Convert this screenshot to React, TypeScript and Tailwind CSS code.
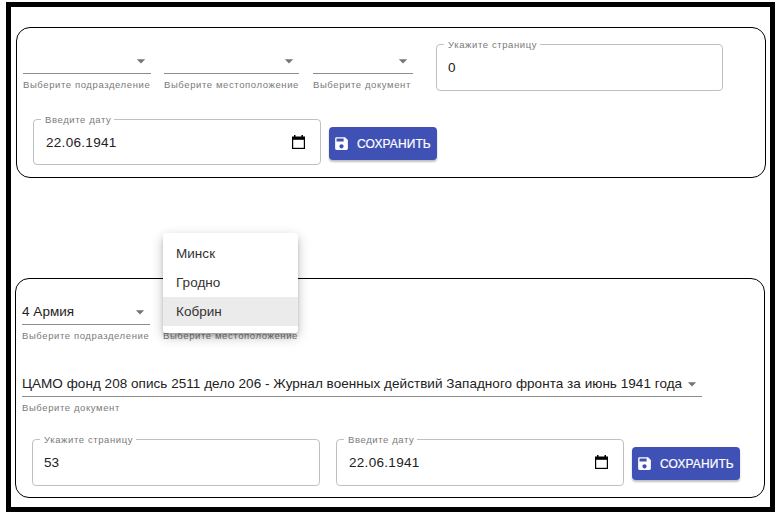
import React from "react";

const font = "font-['Liberation_Sans',Arial,sans-serif]";

function Arrow() {
  return (
    <svg viewBox="0 0 24 24" className="h-[20px] w-[20px] shrink-0 fill-[#757575]">
      <path d="M7 10l5 5 5-5z" />
    </svg>
  );
}

function Select({ width, value, helper }: { width: string; value?: string; helper: string }) {
  return (
    <div className={`${width} shrink-0`}>
      <div className="flex h-[26px] items-center justify-between border-b border-[#8c8c8c] text-[13.5px] tracking-[0.04px] text-[#212121]">
        <span className="whitespace-nowrap pt-px">{value}</span>
        <Arrow />
      </div>
      <div className="mt-[4px] whitespace-nowrap text-[9.5px] leading-[14px] tracking-[0.6px] text-[#7a7a7a]">{helper}</div>
    </div>
  );
}

function Outlined({ size, label, value, date }: { size: string; label: string; value: string; date?: boolean }) {
  return (
    <fieldset className={`${size} shrink-0 rounded-[4px] border border-[#c0c0c0]`}>
      <legend className="ml-[7px] h-[11px] whitespace-nowrap pl-[4px] pr-[3px] text-[9.5px] leading-[11px] tracking-[0.6px] text-[#7a7a7a]">{label}</legend>
      <div className="flex items-center justify-between pl-[11px] pr-[15px] pt-[9px] text-[13.5px] leading-[18px] text-[#212121]">
        <span className={date ? "pl-px tracking-[0.3px]" : "tracking-[0.04px]"}>{value}</span>
        {date && (
          <svg viewBox="0 0 13 14" className="-mt-[2px] h-[14px] w-[13px]">
            <path d="M2 0h1.500v1.500h6V0H11v1.500h2V14H0V1.500h2z" fill="#000" />
            <path d="M1.200 4.800h10.600v8h-10.600z" fill="#fff" />
          </svg>
        )}
      </div>
    </fieldset>
  );
}

function SaveButton() {
  return (
    <button className="flex h-[33px] w-[108px] shrink-0 items-center rounded-[4px] bg-[#3f51b5] pl-[4px] text-[12px] font-medium tracking-[0.1px] text-white shadow-[0_2px_2px_rgba(0,0,0,0.25)] [-webkit-text-stroke:0.2px_white]">
      <svg viewBox="0 0 24 24" className="mr-[7px] h-[17px] w-[17px] fill-white">
        <path d="M17 3H5c-1.110 0-2 .9-2 2v14c0 1.100.89 2 2 2h14c1.100 0 2-.9 2-2V7l-4-4zm-5 16c-1.660 0-3-1.340-3-3s1.340-3 3-3 3 1.340 3 3-1.340 3-3 3zm3-10H5V5h10v4z" />
      </svg>
      СОХРАНИТЬ
    </button>
  );
}

export default function App() {
  return (
    <div className={`h-[516px] w-[779px] bg-white pl-[6px] pt-[2px] ${font}`}>
      <main className="h-[510px] w-[769px] border-[5px] border-black bg-white pt-[20px]">
        <section className="ml-[5px] h-[151px] w-[750px] rounded-[14px] border border-black">
          <div className="flex pl-[6px] pt-[16px]">
            <div className="flex gap-[13px] pt-[4px]">
              <Select width="w-[128px]" helper="Выберите подразделение" />
              <Select width="w-[135px]" helper="Выберите местоположение" />
              <div className="pl-px">
                <Select width="w-[100px]" helper="Выберите документ" />
              </div>
            </div>
            <div className="-mt-[5px] ml-[23px]">
              <Outlined size="h-[52px] w-[287px]" label="Укажите страницу" value="0" />
            </div>
          </div>
          <div className="ml-[16px] mt-[22px] flex gap-[8px]">
            <Outlined size="h-[51px] w-[288px]" label="Введите дату" value="22.06.1941" date />
            <div className="pt-[13px]">
              <SaveButton />
            </div>
          </div>
        </section>
        <section className="relative ml-[4px] mt-[100px] h-[220px] w-[750px] rounded-[14px] border border-black">
          <div className="flex gap-[13px] pl-[6px] pt-[20px]">
            <Select width="w-[128px]" value="4 Армия" helper="Выберите подразделение" />
            <Select width="w-[135px]" helper="Выберите местоположение" />
          </div>
          <div className="mt-[28px] pl-[6px]">
            <Select
              width="w-[680px]"
              value="ЦАМО фонд 208 опись 2511 дело 206 - Журнал военных действий Западного фронта за июнь 1941 года"
              helper="Выберите документ"
            />
          </div>
          <div className="ml-[16px] mt-[19px] flex">
            <Outlined size="h-[52px] w-[288px]" label="Укажите страницу" value="53" />
            <div className="ml-[16px]">
              <Outlined size="h-[52px] w-[288px]" label="Введите дату" value="22.06.1941" date />
            </div>
            <div className="ml-[8px] pt-[13px]">
              <SaveButton />
            </div>
          </div>
          <ul className="absolute -top-[46px] left-[147px] h-[100px] w-[135px] rounded-[3px] bg-white pt-[6px] text-[13.5px] leading-[29px] tracking-[0.04px] text-[#333] shadow-[0_4px_5px_-2px_rgba(0,0,0,0.3),0_4px_12px_rgba(0,0,0,0.25)]">
            <li className="pl-[13px]">Минск</li>
            <li className="pl-[13px]">Гродно</li>
            <li className="bg-[#ebebeb] pl-[13px]">Кобрин</li>
          </ul>
        </section>
      </main>
    </div>
  );
}
